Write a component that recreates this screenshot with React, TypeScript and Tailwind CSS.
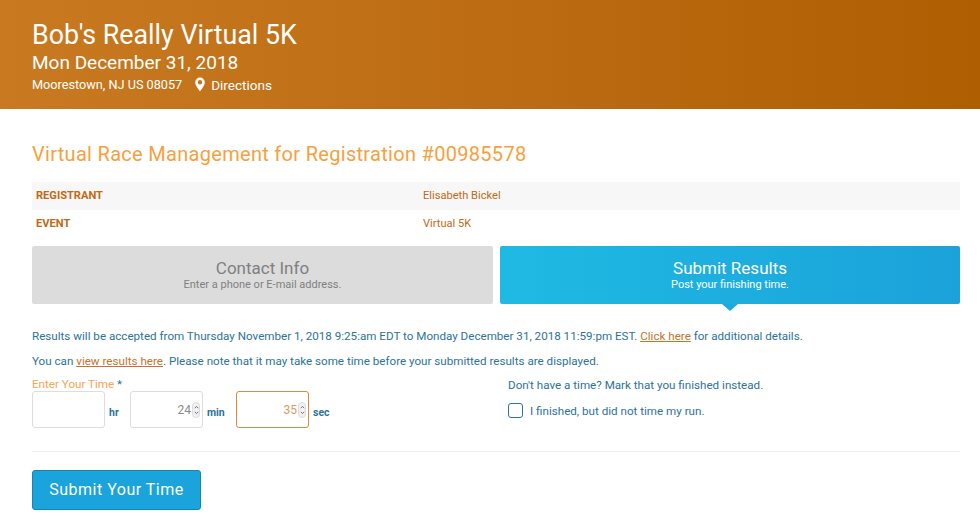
const font = { fontFamily: "Roboto, sans-serif" };

function Spinner() {
  return (
    <span className="flex h-[16px] w-[8px] flex-col items-center justify-center rounded-[4px] border border-[#dddddd] bg-[#f1f1f1]">
      <svg width="5" height="12" viewBox="0 0 5 12" fill="none" stroke="#666666" strokeWidth="0.9">
        <path d="M0.8 4.2 2.5 2.4 4.2 4.2" />
        <path d="M0.8 7.8 2.5 9.6 4.2 7.8" />
      </svg>
    </span>
  );
}

function TimeField({ value, unit, active, unitWidth }: { value?: string; unit: string; active?: boolean; unitWidth: string }) {
  return (
    <div className="flex items-end">
      <div
        className={`flex h-[37px] w-[73px] items-center justify-end gap-[1px] rounded-[3px] border pr-[2px] text-[12px] ${
          active ? "border-[#d98a3d] text-[#dd9a5f]" : "border-[#dddddd] text-[#8a8a8a]"
        }`}
      >
        {value}
        {value && <Spinner />}
      </div>
      <span className={`pb-[9px] pl-[4px] text-[10.5px] leading-[12px] font-bold text-[#2d7396] ${unitWidth}`}>{unit}</span>
    </div>
  );
}

export default function App() {
  return (
    <div style={font} className="h-[523px] w-[980px] overflow-hidden bg-white text-[#2d7396]">
      <header className="h-[109px] bg-gradient-to-r from-[#c97a20] to-[#b05e02] pt-[20px] pl-[32px] text-white">
        <h1 className="text-[26.8px] leading-[30px] font-normal">Bob's Really Virtual 5K</h1>
        <p className="text-[19px] leading-[26px] font-normal">Mon December 31, 2018</p>
        <div className="flex items-center text-[12.7px] leading-[18px] font-normal">
          <span>Moorestown, NJ US 08057</span>
          <svg className="mr-[6px] ml-[13px] -translate-y-[1px]" width="10" height="15" viewBox="0 0 10 14" fill="white">
            <path
              fillRule="evenodd"
              d="M5 0a4.8 4.8 0 0 0-4.8 4.8C.2 8 3.6 12 5 14c1.4-2 4.8-6 4.8-9.2A4.8 4.8 0 0 0 5 0Zm0 2.6a2.2 2.2 0 1 1 0 4.4 2.2 2.2 0 0 1 0-4.4Z"
            />
          </svg>
          <span className="text-[13.5px]">Directions</span>
        </div>
      </header>

      <main className="px-[20px] pl-[32px]">
        <h2 className="mt-[32px] text-[20px] leading-[26px] tracking-[0.3px] text-[#f99f3e]">
          Virtual Race Management for Registration #00985578
        </h2>

        <div className="mt-[15px] text-[11.1px] text-[#bf6a14]">
          <div className="flex h-[28px] items-center bg-[#f7f7f7] pl-[4px]">
            <span className="w-[387px] font-bold">REGISTRANT</span>
            <span>Elisabeth Bickel</span>
          </div>
          <div className="flex h-[28px] items-center pl-[4px]">
            <span className="w-[387px] font-bold">EVENT</span>
            <span>Virtual 5K</span>
          </div>
        </div>

        <div className="mt-[8px] flex gap-[7px]">
          <div className="flex h-[58px] w-[461px] flex-col items-center justify-center rounded-[2px] bg-[#dcdcdc] text-[#808080]">
            <span className="text-[17px] leading-[19px]">Contact Info</span>
            <span className="text-[11px] leading-[13px]">Enter a phone or E-mail address.</span>
          </div>
          <div className="relative flex h-[58px] w-[460px] flex-col items-center justify-center rounded-[2px] bg-gradient-to-r from-[#1fbae3] to-[#1ba2da] text-white">
            <span className="text-[17px] leading-[19px]">Submit Results</span>
            <span className="text-[11px] leading-[13px]">Post your finishing time.</span>
            <span className="absolute top-full left-1/2 h-0 w-0 -translate-x-1/2 border-t-[7px] border-r-[8px] border-l-[8px] border-t-[#1dabdd] border-r-transparent border-l-transparent" />
          </div>
        </div>

        <p className="mt-[25px] text-[11.63px] leading-[14px]">
          Results will be accepted from Thursday November 1, 2018 9:25:am EDT to Monday December 31, 2018 11:59:pm EST.{" "}
          <a className="text-[#c8722a] underline">Click here</a> for additional details.
        </p>
        <p className="mt-[11px] text-[11.63px] leading-[14px]">
          You can <a className="text-[#c8722a] underline">view results here</a>. Please note that it may take some time
          before your submitted results are displayed.
        </p>

        <div className="mt-[9px] flex">
          <div className="w-[476px]">
            <label className="block text-[11.63px] leading-[14px] text-[#f9a552]">
              Enter Your Time <span className="text-[#2d7396]">*</span>
            </label>
            <div className="flex">
              <TimeField unit="hr" unitWidth="w-[25px]" />
              <TimeField value="24" unit="min" unitWidth="w-[33px]" />
              <TimeField value="35" unit="sec" active unitWidth="w-[24px]" />
            </div>
          </div>
          <div className="text-[11.63px]">
            <p className="mt-[1px] leading-[14px]">Don't have a time? Mark that you finished instead.</p>
            <label className="mt-[11px] flex items-center gap-[7px] leading-[14px]">
              <span className="h-[15px] w-[15px] rounded-[3px] border-[1.5px] border-[#2d7396]" />
              I finished, but did not time my run.
            </label>
          </div>
        </div>

        <hr className="mt-[23px] border-t border-[#f0f0f0]" />

        <button className="mt-[18px] h-[40px] w-[169px] rounded-[3px] border border-[#1684b5] bg-[#1ba3db] text-[16px] tracking-[0.5px] text-white">
          Submit Your Time
        </button>
      </main>
    </div>
  );
}
